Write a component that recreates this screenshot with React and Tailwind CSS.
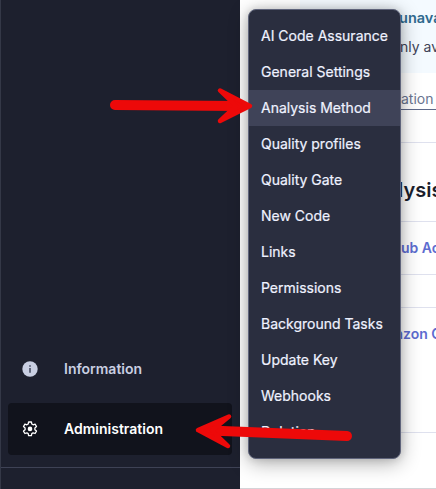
const menuItems = [
  'AI Code Assurance',
  'General Settings',
  'Analysis Method',
  'Quality profiles',
  'Quality Gate',
  'New Code',
  'Links',
  'Permissions',
  'Background Tasks',
  'Update Key',
  'Webhooks',
  'Deletion',
];

function InfoIcon() {
  return (
    <svg width="16" height="16" viewBox="0 0 16 16">
      <circle cx="8" cy="8" r="7.7" fill="#c9cfe2" />
      <path d="M7.1 4.2h1.8v1.6H7.1zM7.1 7h1.8v4.7H7.1z" fill="#555b70" />
    </svg>
  );
}

function GearIcon() {
  return (
    <svg width="16" height="16" viewBox="0 0 16 16" fill="none" stroke="#fff" strokeLinejoin="round">
      <path
        strokeWidth="1.3"
        d="M6.6 1h2.8l.4 2 1.3.8 2-.7 1.4 2.4-1.6 1.4v1.8l1.6 1.4-1.4 2.4-2-.7-1.3.8-.4 2H6.6l-.4-2-1.3-.8-2 .7-1.4-2.4 1.6-1.4V6.9L1.5 5.5l1.4-2.4 2 .7L6.2 3z"
      />
      <circle cx="8" cy="7.9" r="2.3" fill="#fff" stroke="none" />
    </svg>
  );
}

function Sidebar() {
  return (
    <aside className="flex h-full w-[240px] shrink-0 flex-col border-l border-[#343847] bg-[#1d202e] text-sm font-semibold">
      <div className="mt-[343px] flex h-[52px] items-center pl-[21px] text-[#c9cfe2]">
        <InfoIcon />
        <span className="ml-[26px]">Information</span>
      </div>
      <div className="ml-[7px] mr-2 mt-2 flex h-[52px] items-center rounded bg-[#11131c] pl-[14px] text-white">
        <GearIcon />
        <span className="ml-[26px]">Administration</span>
      </div>
      <div className="mt-3 border-t border-[#3e4255]" />
    </aside>
  );
}

function Content() {
  return (
    <main className="flex h-full min-w-0 flex-1 flex-col overflow-hidden whitespace-nowrap border-b border-[#d4d4d8] bg-white pl-[60px] text-sm">
      <div className="h-[73px] shrink-0 bg-[#f4faff] pl-[99px]">
        <div className="mt-2 h-[29px] text-[14.5px] font-semibold leading-5 text-[#2f6a8f]">unava</div>
        <div className="pl-px leading-5 text-[#3e4357]">nly av</div>
      </div>
      <div className="flex h-[70px] shrink-0 border-b border-[#dfe1ee] pl-[101px] pt-[15px] text-[#6a7590]">
        <span className="h-[22px] border-b border-[#5e6989] leading-[22px]">ation </span>
        <span className="h-[22px] w-4 border-b border-[#5e6989]" />
      </div>
      <div className="flex h-[79px] shrink-0 items-center border-b border-[#dfe1ee] pl-[98px] pt-4 text-xl font-semibold text-[#1b1e2c]">lysis</div>
      <div className="flex h-[53px] shrink-0 items-center border-b border-[#dfe1ee] pl-[101px] font-semibold text-[#5d6cd0]">ub Ac</div>
      <div className="h-[33px] shrink-0 border-b border-[#dfe1ee]" />
      <div className="h-[125px] shrink-0 border-b border-[#dfe1ee] pl-[95px] pt-4 font-semibold leading-5 text-[#5d6cd0]">azon C</div>
    </main>
  );
}

export default function App() {
  return (
    <div className="relative flex h-[489px] w-[436px] overflow-hidden font-['Inter','Liberation_Sans',sans-serif]">
      <Sidebar />
      <Content />
      <nav className="absolute left-[248px] top-[9px] w-[153px] rounded-lg border border-[#5f647b] bg-[#2a2e3f] py-2 text-sm text-[#eff2ff] shadow-[0_4px_20px_rgba(0,0,0,0.32),0_0_8px_rgba(0,0,0,0.14)]">
        {menuItems.map((item) => (
          <div
            key={item}
            className={`flex h-9 items-center whitespace-nowrap pl-3 [-webkit-text-stroke:0.2px_#eff2ff] ${item === 'Analysis Method' ? 'bg-[#3f4358]' : ''}`}
          >
            {item}
          </div>
        ))}
      </nav>
      <svg className="pointer-events-none absolute inset-0" width="436" height="489" fill="#ed0909" stroke="#ed0909" strokeLinecap="round" strokeLinejoin="round">
        <path d="M115 105L238 106" strokeWidth="10" />
        <path d="M220 90.5L250 106L220 121L236 106Z" strokeWidth="4.5" />
        <path d="M347 436L210 430.5" strokeWidth="10" />
        <path d="M229 416.5L198 430L228 446L212 430.5Z" strokeWidth="4.5" />
      </svg>
    </div>
  );
}
